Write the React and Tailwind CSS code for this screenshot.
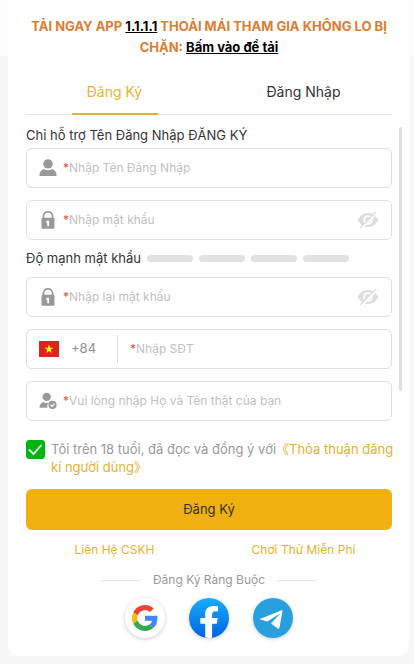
import React, { useState } from 'react';

const UserIcon = () => (
  <svg viewBox="0 0 18 18" className="w-[18px] h-[18px] shrink-0" fill="#999999" aria-hidden="true">
    <circle cx="9" cy="4.9" r="4.7" />
    <path d="M0.5 17v-1.5c0-2.6 2-4.6 4.7-5.4 1 .8 2.3 1.2 3.8 1.2s2.8-.4 3.8-1.2c2.700.8 4.700 2.800 4.700 5.400V17z" />
  </svg>
);

const LockIcon = () => (
  <svg viewBox="0 0 18 18" className="w-[18px] h-[18px] shrink-0" aria-hidden="true">
    <path d="M4.400 8V5.200a4.600 4.400 0 0 1 9.200 0V8" fill="none" stroke="#999999" strokeWidth="1.700" />
    <rect x="2.500" y="6.800" width="13" height="11" rx="1" fill="#999999" />
    <path d="M7.400 9.800h2.700v5.400H8.300v-2.900h-.9z" fill="#ffffff" />
  </svg>
);

const UserCheckIcon = () => (
  <svg viewBox="0 0 18 18" className="w-[18px] h-[18px] shrink-0" aria-hidden="true">
    <circle cx="7.700" cy="4.900" r="4.200" fill="#999999" />
    <path d="M0.500 15.800c0-3 1.500-5 4-5.800.9.600 2 .9 3.200.9.800 0 1.600-.1 2.300-.4a5 5 0 0 0-1.500 5.300z" fill="#999999" />
    <circle cx="13.500" cy="12.900" r="4.100" fill="#999999" />
    <path d="M11.500 12.900l1.500 1.500 2.600-2.800" fill="none" stroke="#ffffff" strokeWidth="1.200" />
  </svg>
);

const EyeOffIcon = () => (
  <svg viewBox="0 0 22 18" className="w-[22px] h-[18px]" aria-hidden="true">
    <path
      fillRule="evenodd"
      fill="#dddddd"
      d="M0.800 9C3 4.500 6.600 2 11 2s8 2.500 10.200 7C19 13.500 15.400 16 11 16S3 13.500 0.800 9zM11 4.200a4.800 4.800 0 1 0 0 9.600 4.800 4.800 0 0 0 0-9.600z"
    />
    <circle cx="11" cy="9" r="3" fill="#dddddd" />
    <path d="M4 18L20 2" stroke="#ffffff" strokeWidth="2" />
    <path d="M3 17L19 1" stroke="#dddddd" strokeWidth="1.300" />
  </svg>
);

const VietnamFlag = () => (
  <svg viewBox="0 0 20 16" className="w-5 h-4 shrink-0" aria-hidden="true">
    <rect width="20" height="16" fill="#da251d" />
    <path d="M10 3.500l1.050 3.250h3.400l-2.750 2 1.050 3.250-2.750-2-2.750 2 1.050-3.250-2.750-2h3.400z" fill="#ffff00" />
  </svg>
);

const GoogleLogo = () => (
  <svg viewBox="0 0 48 48" className="w-[26px] h-[26px]" aria-hidden="true">
    <path fill="#EA4335" d="M24 9.500c3.540 0 6.710 1.220 9.210 3.600l6.850-6.850C35.900 2.380 30.470 0 24 0 14.620 0 6.510 5.380 2.560 13.220l7.980 6.190C12.430 13.720 17.740 9.500 24 9.500z" />
    <path fill="#4285F4" d="M46.980 24.550c0-1.570-.15-3.090-.38-4.550H24v9.020h12.940c-.58 2.960-2.260 5.480-4.780 7.180l7.730 6c4.510-4.180 7.090-10.360 7.090-17.650z" />
    <path fill="#FBBC05" d="M10.530 28.590c-.48-1.450-.76-2.990-.76-4.590s.27-3.140.76-4.590l-7.980-6.190C.92 16.460 0 20.120 0 24s.92 7.540 2.560 10.780l7.970-6.190z" />
    <path fill="#34A853" d="M24 48c6.480 0 11.930-2.130 15.890-5.810l-7.730-6c-2.150 1.450-4.920 2.300-8.160 2.300-6.260 0-11.570-4.220-13.470-9.910l-7.980 6.190C6.510 42.620 14.620 48 24 48z" />
  </svg>
);

const FacebookLogo = () => (
  <svg viewBox="0 0 40 40" className="w-10 h-10" aria-hidden="true">
    <defs>
      <linearGradient id="fb" x1="0" y1="0" x2="0" y2="1">
        <stop offset="0" stopColor="#18acfe" />
        <stop offset="1" stopColor="#0163e0" />
      </linearGradient>
    </defs>
    <circle cx="20" cy="20" r="20" fill="url(#fb)" />
    <path d="M27.800 25.800l.9-5.800h-5.600v-3.700c0-1.600.8-3.100 3.300-3.100H29V8.300s-2.300-.4-4.500-.4c-4.900 0-8.300 2.800-8.300 7.800V20h-4.900v5.800h4.900v13.800a20 20 0 0 0 6.900.1V25.800z" fill="#ffffff" />
  </svg>
);

const TelegramLogo = () => (
  <svg viewBox="0 0 40 40" className="w-10 h-10" aria-hidden="true">
    <circle cx="20" cy="20" r="20" fill="#29a0dd" />
    <path d="M7.600 20.800L28.600 12.300c.6-.2 1 .1.900.8L26.500 29.500c-.2 1.200-.9 1.500-1.900.9l-6.600-4.900 8.600-9.200c.2-.3-.1-.4-.4-.2l-11.700 7.300-6.800-1.700c-.9-.2-.9-.6-.1-.9z" fill="#ffffff" />
  </svg>
);

const Field = ({ id, icon: Icon, label, type = 'text', secret }) => (
  <div className="flex items-center h-10 rounded-md border border-[#dedede] px-3">
    <Icon />
    <label htmlFor={id} className="ml-1.5 w-1.5 shrink-0 text-xs text-[#e0523c]" aria-label={label}>*</label>
    <input
      id={id}
      type={type}
      placeholder={label}
      className="flex-1 min-w-0 bg-transparent text-xs text-[#333333] placeholder:text-[#c0c0c0] outline-none"
    />
    {secret && (
      <button type="button" aria-label="Hiện mật khẩu" className="shrink-0">
        <EyeOffIcon />
      </button>
    )}
  </div>
);

const socials = [
  { name: 'Google', logo: GoogleLogo },
  { name: 'Facebook', logo: FacebookLogo },
  { name: 'Telegram', logo: TelegramLogo },
];

export default function App() {
  const [agreed, setAgreed] = useState(true);

  return (
    <div className="bg-[linear-gradient(#fdfdfd_56px,#f7f7f7_56px)] pb-2 font-['Inter','Noto_Sans_CJK_SC',sans-serif]">
      <main className="relative ml-2 mr-[5px] rounded-b-xl bg-white pt-4 pb-[18px] pl-[18px] pr-[17px]">
        <p className="text-center text-[13px] leading-[21px] font-bold text-[#dc7d32]">
          TẢI NGAY APP <a href="#app" className="text-black underline">1.1.1.1</a> THOẢI MÁI THAM GIA KHÔNG LO BỊ CHẶN:{' '}
          <a href="#download" className="text-black underline">Bấm vào để tải</a>
        </p>

        {/* Tabs */}
        <div className="mt-3 grid grid-cols-2 gap-3 border-b border-[#e2e2e2] text-sm">
          <button type="button" className="-mb-px h-[45px] w-[86px] justify-self-center border-b-2 border-[#e3b02e] text-[#e8b52c]">
            Đăng Ký
          </button>
          <button type="button" className="-mb-px h-[45px] justify-self-center border-b-2 border-transparent text-[#333333]">
            Đăng Nhập
          </button>
        </div>

        <form>
          <p className="mt-2.5 mb-[3px] text-[13px] leading-5 text-[#333333]">Chỉ hỗ trợ Tên Đăng Nhập ĐĂNG KÝ</p>
          <div className="flex flex-col gap-3">
            <Field id="username" icon={UserIcon} label="Nhập Tên Đăng Nhập" />
            <Field id="password" icon={LockIcon} label="Nhập mật khẩu" type="password" secret />
          </div>

          {/* Password strength */}
          <div className="mt-2 mb-[9px] flex items-center gap-1.5 text-[13px] leading-5 text-[#333333]">
            <span>Độ mạnh mật khẩu</span>
            {[1, 2, 3, 4].map((level) => (
              <span key={level} className="h-[7px] w-[46px] rounded-full bg-[#e2e2e2]"></span>
            ))}
          </div>

          <div className="flex flex-col gap-3">
            <Field id="confirm" icon={LockIcon} label="Nhập lại mật khẩu" type="password" secret />
            <div className="flex items-center h-10 rounded-md border border-[#dedede] px-3">
              <VietnamFlag />
              <span className="ml-3 w-[46px] text-[13px] text-[#8f8f8f]">+84</span>
              <span className="h-7 w-px bg-[#dddddd]"></span>
              <label htmlFor="phone" className="ml-3 w-1.5 shrink-0 text-xs text-[#e0523c]" aria-label="Nhập SĐT">*</label>
              <input
                id="phone"
                type="tel"
                placeholder="Nhập SĐT"
                className="flex-1 min-w-0 bg-transparent text-xs text-[#333333] placeholder:text-[#c0c0c0] outline-none"
              />
            </div>
            <Field id="fullname" icon={UserCheckIcon} label="Vui lòng nhập Họ và Tên thật của bạn" />
          </div>

          {/* Terms */}
          <div className="-mr-2 mt-[19px] flex items-start gap-1.5">
            <span className="relative h-[19px] w-[19px] shrink-0">
              <input
                id="terms"
                type="checkbox"
                checked={agreed}
                onChange={() => setAgreed(!agreed)}
                className="block h-[19px] w-[19px] appearance-none rounded-[3px] border border-[#00b512] checked:bg-[#00b512]"
              />
              {agreed && (
                <svg viewBox="0 0 19 19" className="pointer-events-none absolute inset-0" aria-hidden="true">
                  <path d="M3 9.500l4.500 4.500 8-9" fill="none" stroke="#ffffff" strokeWidth="1.800" />
                </svg>
              )}
            </span>
            <label htmlFor="terms" className="text-[13px] leading-[18px] text-[#999999]">
              Tôi trên 18 tuổi, đã đọc và đồng ý với
              <a href="#terms" className="text-[#e6b131]">《Thỏa thuận đăng kí người dùng》</a>
            </label>
          </div>

          <button type="submit" className="mt-[13px] h-[41px] w-full rounded-md bg-[#f0b010] text-[13px] text-[#333333]">
            Đăng Ký
          </button>
        </form>

        <div className="mt-2.5 grid grid-cols-2 gap-3 text-center text-xs leading-5 text-[#e6b131]">
          <a href="#support">Liên Hệ CSKH</a>
          <a href="#demo">Chơi Thử Miễn Phí</a>
        </div>

        <div className="mt-2.5 flex items-center justify-center gap-3 text-xs leading-5 text-[#999999]">
          <span className="h-px w-10 bg-[#e8e8e8]"></span>
          <span>Đăng Ký Ràng Buộc</span>
          <span className="h-px w-10 bg-[#e8e8e8]"></span>
        </div>

        <div className="mt-2 flex justify-center gap-6">
          {socials.map(({ name, logo: Logo }) => (
            <button
              key={name}
              type="button"
              aria-label={name}
              className="flex h-10 w-10 items-center justify-center rounded-full bg-white shadow-[0_1px_4px_rgba(0,0,0,0.2)]"
            >
              <Logo />
            </button>
          ))}
        </div>

        {/* Scroll thumb over the form */}
        <div className="absolute top-[127px] right-[7px] h-[264px] w-[3px] rounded-full bg-[#dedede]"></div>
      </main>
    </div>
  );
}
